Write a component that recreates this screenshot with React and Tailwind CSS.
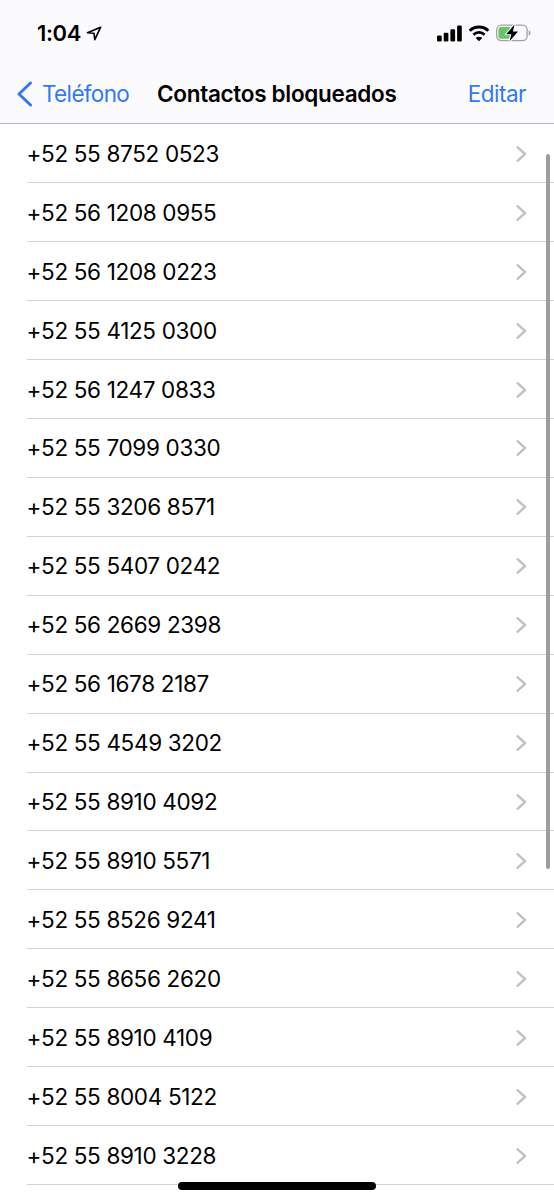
// Blocked contacts list, light mode.
const CONTACTS = [
  "+52 55 8752 0523",
  "+52 56 1208 0955",
  "+52 56 1208 0223",
  "+52 55 4125 0300",
  "+52 56 1247 0833",
  "+52 55 7099 0330",
  "+52 55 3206 8571",
  "+52 55 5407 0242",
  "+52 56 2669 2398",
  "+52 56 1678 2187",
  "+52 55 4549 3202",
  "+52 55 8910 4092",
  "+52 55 8910 5571",
  "+52 55 8526 9241",
  "+52 55 8656 2620",
  "+52 55 8910 4109",
  "+52 55 8004 5122",
  "+52 55 8910 3228",
];

export default function App() {
  return (
    <div className="relative h-[1200px] w-[554px] overflow-hidden bg-white font-['Inter',sans-serif] text-black">
      <header className="flex h-[124.4px] flex-col border-b-[1.5px] border-[#b4b4b6] bg-[#fbfbfd]">
        <StatusBar />
        <NavBar />
      </header>

      <ul>
        {CONTACTS.map((number) => (
          <ContactRow key={number} number={number} />
        ))}
      </ul>

      {/* scroll indicator and home bar float over the list */}
      <div className="absolute top-[154px] left-[546px] h-[715px] w-[4px] rounded-full bg-[#9d9d9d]" />
      <div className="absolute top-[1182px] left-[178px] h-[7.5px] w-[198px] rounded-full bg-black" />
    </div>
  );
}

// ---------- Header ----------
function StatusBar() {
  return (
    <div className="flex h-[66px] items-center justify-between pr-[22px] pl-[37px]">
      <div className="flex items-center gap-[5px]">
        <span className="text-[22px] leading-none font-semibold tracking-[-0.4px]">1:04</span>
        <LocationIcon />
      </div>
      <div className="flex items-center gap-[6px]">
        <SignalIcon />
        <WifiIcon />
        <BatteryIcon />
      </div>
    </div>
  );
}

function NavBar() {
  return (
    <nav className="grid h-[56px] grid-cols-[157px_1fr_auto] items-center pr-[28px] text-[22.5px] leading-none">
      <button className="flex items-center gap-[8px] pl-[17px] text-[#3478f6]">
        <svg width="17" height="26" viewBox="0 0 17 26" fill="none" className="shrink-0">
          <path d="M13.5 2 2 13l11.5 11" stroke="currentColor" strokeWidth="3" strokeLinecap="round" strokeLinejoin="round" />
        </svg>
        <span className="tracking-[-0.65px]">Teléfono</span>
      </button>
      <h1 className="font-semibold tracking-[-0.3px] whitespace-nowrap">Contactos bloqueados</h1>
      <button className="tracking-[-0.5px] text-[#3478f6]">Editar</button>
    </nav>
  );
}

// ---------- List ----------
function ContactRow({ number }) {
  return (
    <li className="ml-[26.5px] flex h-[58.93px] items-center justify-between border-b border-[#d3d3d5] pr-[27px]">
      <span className="pt-[1.5px] text-[22.5px] leading-none tracking-[-0.34px]">{number}</span>
      <svg width="12" height="18" viewBox="0 0 12 18" fill="none" className="mt-px">
        <path d="m2.5 2.2 7.5 6.800-7.500 6.800" stroke="#c2c2c5" strokeWidth="2.4" strokeLinecap="round" strokeLinejoin="round" />
      </svg>
    </li>
  );
}

// ---------- Icons ----------
function LocationIcon() {
  return (
    <svg width="16" height="15" viewBox="0 0 16 15" fill="none">
      <path d="M14.7 1.2 1.5 6.8l6.5.5.8 6.3Z" stroke="black" strokeWidth="1.6" strokeLinejoin="round" />
    </svg>
  );
}

function SignalIcon() {
  return (
    <svg width="25" height="17" viewBox="0 0 25 17">
      <rect x="0" y="10.5" width="4.7" height="6" rx="1.3" />
      <rect x="6.7" y="7.8" width="4.7" height="8.7" rx="1.3" />
      <rect x="13.4" y="4.3" width="4.7" height="12.2" rx="1.3" />
      <rect x="20.1" y="0.5" width="4.7" height="16" rx="1.3" />
    </svg>
  );
}

function WifiIcon() {
  return (
    <svg width="22" height="17" viewBox="0 0 21 17" fill="none" stroke="black">
      <path d="M1.2 5.7a13.3 13.3 0 0 1 18.6 0" strokeWidth="3" />
      <path d="M4.9 9.7a8 8 0 0 1 11.2 0" strokeWidth="2.7" />
      <path d="M10.5 16.3 7.2 13a4.7 4.7 0 0 1 6.6 0Z" fill="black" stroke="none" />
    </svg>
  );
}

function BatteryIcon() {
  return (
    <svg width="36" height="18" viewBox="0 0 36 18">
      <rect x="0.7" y="1.2" width="30.4" height="15.4" rx="4.6" fill="none" stroke="#a2a2a4" strokeWidth="1.3" />
      <path d="M32.7 6.2c2.4.8 2.4 4.6 0 5.4Z" fill="#a2a2a4" />
      <path d="M5 3.1h9v11.6H5a2.5 2.5 0 0 1-2.5-2.5V5.6A2.5 2.5 0 0 1 5 3.1Z" fill="#65c466" />
      <path
        d="M18.6.4 10.2 10.2h5.2l-2 7.4L22 7.6h-5.2Z"
        fill="black"
        stroke="#fbfbfd"
        strokeWidth="2.2"
        strokeLinejoin="round"
        paintOrder="stroke"
      />
    </svg>
  );
}
